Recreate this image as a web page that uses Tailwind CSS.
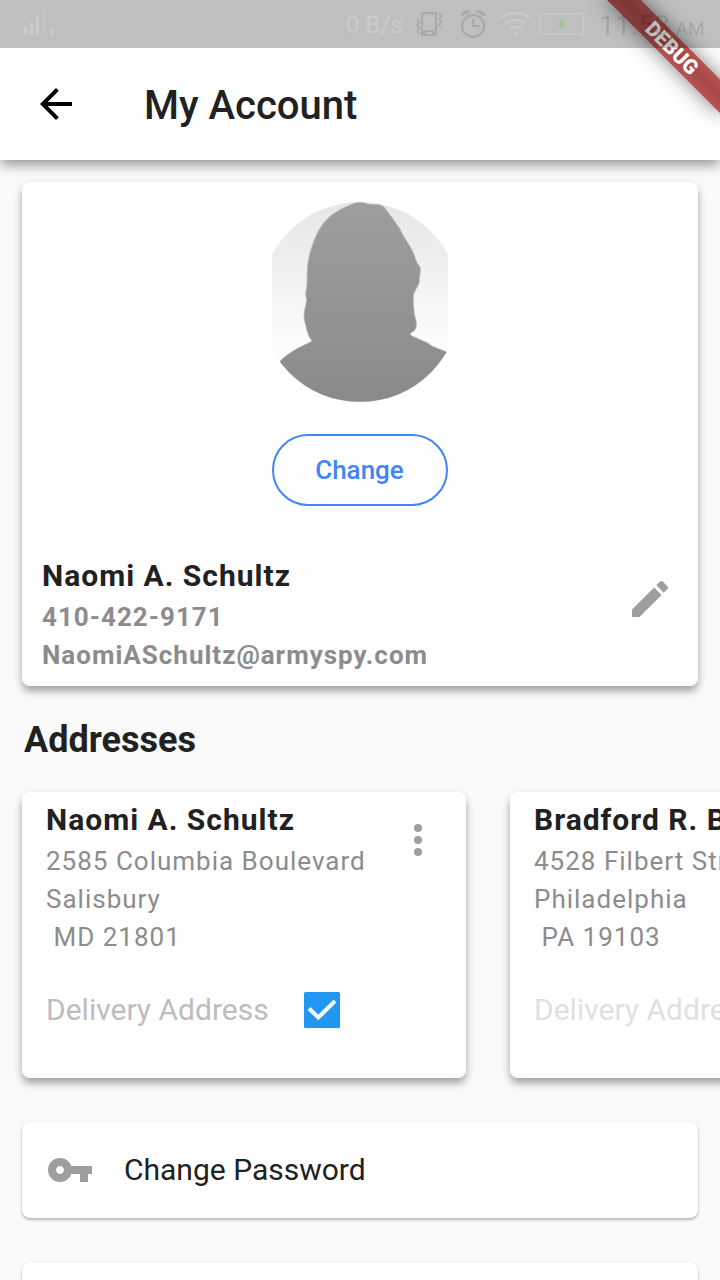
<!DOCTYPE html>
<html lang="en">
<head>
<meta charset="utf-8">
<title>My Account</title>
<script src="https://cdn.jsdelivr.net/npm/@tailwindcss/browser@4"></script>
</head>
<body class="bg-[#fafafa]">
<div class="relative flex h-[1280px] w-[720px] flex-col overflow-hidden bg-[#fafafa] font-['Roboto',sans-serif] text-[#212121]">
  <header class="z-10 flex h-40 shrink-0 items-center bg-white pt-12 pl-8 shadow-[0_6px_10px_-1px_rgba(0,0,0,0.3),0_4px_16px_0_rgba(0,0,0,0.13)]">
    <svg class="size-12 text-black" viewBox="0 0 24 24" fill="currentColor"><path d="M20 11H7.83l5.59-5.59L12 4l-8 8 8 8 1.41-1.41L7.83 13H20v-2z"/></svg>
    <h1 class="ml-16 pt-1 text-[40px] leading-[48px] font-medium whitespace-nowrap">My Account</h1>
  </header>

  <main class="flex flex-col pt-[22px]">
    <section class="mx-[22px] flex h-[504px] flex-col items-center rounded-lg bg-white pt-5 shadow-[0_6px_8px_-1px_rgba(0,0,0,0.3),0_3px_10px_0_rgba(0,0,0,0.13)]">
      <svg class="h-[200px] w-44" viewBox="272 202 176 200">
        <defs>
          <linearGradient id="sky" x1="0" y1="0" x2="0" y2="1"><stop offset="0" stop-color="#e6e6e6"/><stop offset="0.7" stop-color="#fcfcfc"/></linearGradient>
          <linearGradient id="person" x1="0" y1="0" x2="0" y2="1"><stop offset="0" stop-color="#9e9e9e"/><stop offset="1" stop-color="#8a8a8a"/></linearGradient>
          <clipPath id="round"><circle cx="360" cy="302" r="100"/></clipPath>
        </defs>
        <g clip-path="url(#round)">
          <rect x="272" y="202" width="176" height="200" fill="url(#sky)"/>
          <path fill="url(#person)" stroke="#c4c4c4" stroke-width="0.7" d="M352 204C357 201.500 363 201.500 368 204C375 205 379 203 384 207C390 214 395 222 400 229C404 238 409 243 413 252C416 258 416 262 418 264Q421 267 420.500 271C420 276 419 278 419.500 282C417 289 414 291 413.500 296C413 302 414 309 414.500 315C417 321 417 327 415 330L410 334Q411 336 417 338L428 343L432 346L447 352L460 402H264L279 362C285 356 291 352 298 348L312 341Q309 338 307 331L304.500 321Q303 315 305 308L306.500 300L305.500 293Q307 288 307 280Q306 264 311 249Q317 228 329 217Q337 210 352 204Z"/>
        </g>
      </svg>
      <button class="mt-8 flex h-[72px] w-44 shrink-0 items-center justify-center rounded-full border-2 border-[#4285f4] pr-px text-[26px] leading-8 font-medium text-[#4285f4]">Change</button>
      <div class="mt-[52px] flex w-full items-start justify-between pr-6 pl-5">
        <div class="flex flex-col whitespace-nowrap">
          <p class="text-[30px] leading-[36px] font-bold tracking-[1px]">Naomi A. Schultz</p>
          <p class="mt-1 text-[26px] leading-[38px] font-bold tracking-[1px] text-[#8c8c8c]">410-422-9171</p>
          <p class="text-[26px] leading-[38px] font-bold tracking-[1px] text-[#8c8c8c]">NaomiASchultz@armyspy.com</p>
        </div>
        <svg class="mt-[17px] size-12 text-[#9e9e9e]" viewBox="0 0 24 24" fill="currentColor"><path d="M3 17.250V21h3.750L17.810 9.940l-3.750-3.750L3 17.250zM20.710 7.040c.39-.39.39-1.020 0-1.410l-2.340-2.340c-.39-.39-1.020-.39-1.410 0l-1.830 1.830 3.750 3.750 1.830-1.830z"/></svg>
      </div>
    </section>

    <h2 class="mt-8 ml-6 text-[36px] leading-[44px] font-bold whitespace-nowrap">Addresses</h2>

    <div class="mt-[30px] ml-[22px] flex gap-11">
      <section class="flex h-[286px] w-[444px] shrink-0 flex-col rounded-lg bg-white pt-2.5 pl-6 whitespace-nowrap shadow-[0_6px_8px_-1px_rgba(0,0,0,0.3),0_3px_10px_0_rgba(0,0,0,0.13)]">
        <div class="flex items-start justify-between pr-6">
          <div class="flex flex-col">
            <p class="text-[30px] leading-[36px] font-bold tracking-[1px]">Naomi A. Schultz</p>
            <p class="mt-1 text-[26px] leading-[38px] tracking-[1px] text-[#8c8c8c]">2585 Columbia Boulevard</p>
            <p class="text-[26px] leading-[38px] tracking-[1px] text-[#8c8c8c]">Salisbury</p>
            <p class="pl-[7.500px] text-[26px] leading-[38px] tracking-[1px] text-[#8c8c8c]">MD 21801</p>
          </div>
          <svg class="mt-3.5 size-12 text-[#9e9e9e]" viewBox="0 0 24 24" fill="currentColor"><circle cx="12" cy="6" r="2"/><circle cx="12" cy="12" r="2"/><circle cx="12" cy="18" r="2"/></svg>
        </div>
        <div class="mt-9 flex items-center">
          <span class="w-[258px] text-[30px] leading-[36px] text-[#bdbdbd]">Delivery Address</span>
          <svg class="size-9" viewBox="0 0 36 36"><rect width="36" height="36" rx="1.500" fill="#2196f3"/><path d="M5 16.500L14.300 25.500L31 9" fill="none" stroke="#fff" stroke-width="4"/></svg>
        </div>
      </section>
      <section class="flex h-[286px] w-[444px] shrink-0 flex-col rounded-lg bg-white pt-2.5 pl-6 whitespace-nowrap shadow-[0_6px_8px_-1px_rgba(0,0,0,0.3),0_3px_10px_0_rgba(0,0,0,0.13)]">
        <p class="text-[30px] leading-[36px] font-bold tracking-[1px]">Bradford R. B</p>
        <p class="mt-1 text-[26px] leading-[38px] tracking-[1px] text-[#8c8c8c]">4528 Filbert Street</p>
        <p class="text-[26px] leading-[38px] tracking-[1px] text-[#8c8c8c]">Philadelphia</p>
        <p class="pl-[7.500px] text-[26px] leading-[38px] tracking-[1px] text-[#8c8c8c]">PA 19103</p>
        <p class="mt-9 text-[30px] leading-[36px] text-[#e0e0e0]">Delivery Address</p>
      </section>
    </div>

    <section class="mx-[22px] mt-11 flex h-24 shrink-0 items-center rounded-lg bg-white pl-6 shadow-[0_2px_3px_0_rgba(0,0,0,0.25),0_0_2px_0_rgba(0,0,0,0.08)]">
      <svg class="size-12 text-[#9e9e9e]" viewBox="0 0 24 24" fill="currentColor"><path d="M12.650 10C11.830 7.670 9.610 6 7 6c-3.310 0-6 2.690-6 6s2.690 6 6 6c2.610 0 4.830-1.670 5.650-4H17v4h4v-4h2v-4H12.650zM7 14c-1.100 0-2-.9-2-2s.9-2 2-2 2 .9 2 2-.9 2-2 2z"/></svg>
      <span class="ml-[30px] text-[30px] leading-[36px] whitespace-nowrap">Change Password</span>
    </section>
    <section class="mx-[22px] mt-11 h-24 shrink-0 rounded-lg bg-white shadow-[0_2px_3px_0_rgba(0,0,0,0.25),0_0_2px_0_rgba(0,0,0,0.08)]"></section>
  </main>

  <!-- Debug ribbon across the top right corner -->
  <div class="absolute top-0 right-0 z-20 size-0">
    <div class="absolute top-0 left-0 size-0 rotate-45">
      <div class="absolute top-14 -left-20 flex h-6 w-40 items-center justify-center bg-linear-to-b from-[#b55353] via-[#a84747] to-[#b55353] text-[20.400px] leading-6 font-black text-white shadow-[0_0_20px_rgba(0,0,0,0.5)]">DEBUG</div>
    </div>
  </div>

  <!-- Translucent system status bar -->
  <div class="absolute inset-x-0 top-0 z-30 h-12 bg-black/25">
    <svg class="h-12 w-[720px]" viewBox="0 0 720 48">
      <g fill="#cbcbcb"><rect x="24" y="26" width="3" height="9" rx="1"/><rect x="30" y="22" width="3" height="13" rx="1"/><rect x="36" y="16" width="3" height="19" rx="1"/><rect x="42" y="12" width="3" height="23" rx="1" fill="#c4c4c4"/><path d="M50 31.500L51.500 30H53V37H51V33H50Z"/></g>
      <text x="346" y="33" font-size="24" fill="#cbcbcb">0 B/s</text>
      <g fill="none" stroke="#a9a9a9">
        <path fill="#a9a9a9" fill-rule="evenodd" stroke="none" d="M422 12h14q1 0 1 1v22q0 1-1 1h-14q-1 0-1-1V13q0-1 1-1ZM423 14.500v16h12v-16ZM426 32v2h6v-2Z"/>
        <path stroke-width="1.600" d="M417 19l2.500 3-2.500 3 2.500 3-2.500 3 2.500 3M439 13l2.500 3-2.500 3 2.500 3-2.500 3 2.500 3"/>
        <circle cx="473" cy="26" r="11" stroke-width="2.300"/>
        <path stroke-width="2" d="M473 19v7h7"/>
        <path fill="#a9a9a9" stroke="none" d="M461 16.500Q460 12 465 10.500Q468 9.500 471 11.500ZM485 16.500Q486 12 481 10.500Q478 9.500 475 11.500Z"/>
      </g>
      <g fill="none" stroke="#cbcbcb" stroke-width="2.200"><path d="M501 17Q515.500 9 530 17M505.500 23Q515.500 17 525.500 23M510 29Q515.500 25 521 29"/><circle cx="515.500" cy="34" r="1.600" fill="#cbcbcb" stroke="none"/></g>
      <rect x="539.500" y="13.500" width="44" height="21" rx="3" fill="none" stroke="#cbcbcb" stroke-width="1.200"/>
      <path fill="#9fc491" d="M563 17l-6 8.500h4l-1 6 6-8.500h-4z"/>
      <text x="599" y="35" font-size="28" letter-spacing="0.3" fill="#000" fill-opacity="0.12">11:53</text>
      <text x="675.500" y="35" font-size="19" fill="#000" fill-opacity="0.14">AM</text>
    </svg>
  </div>
</div>
</body>
</html>
